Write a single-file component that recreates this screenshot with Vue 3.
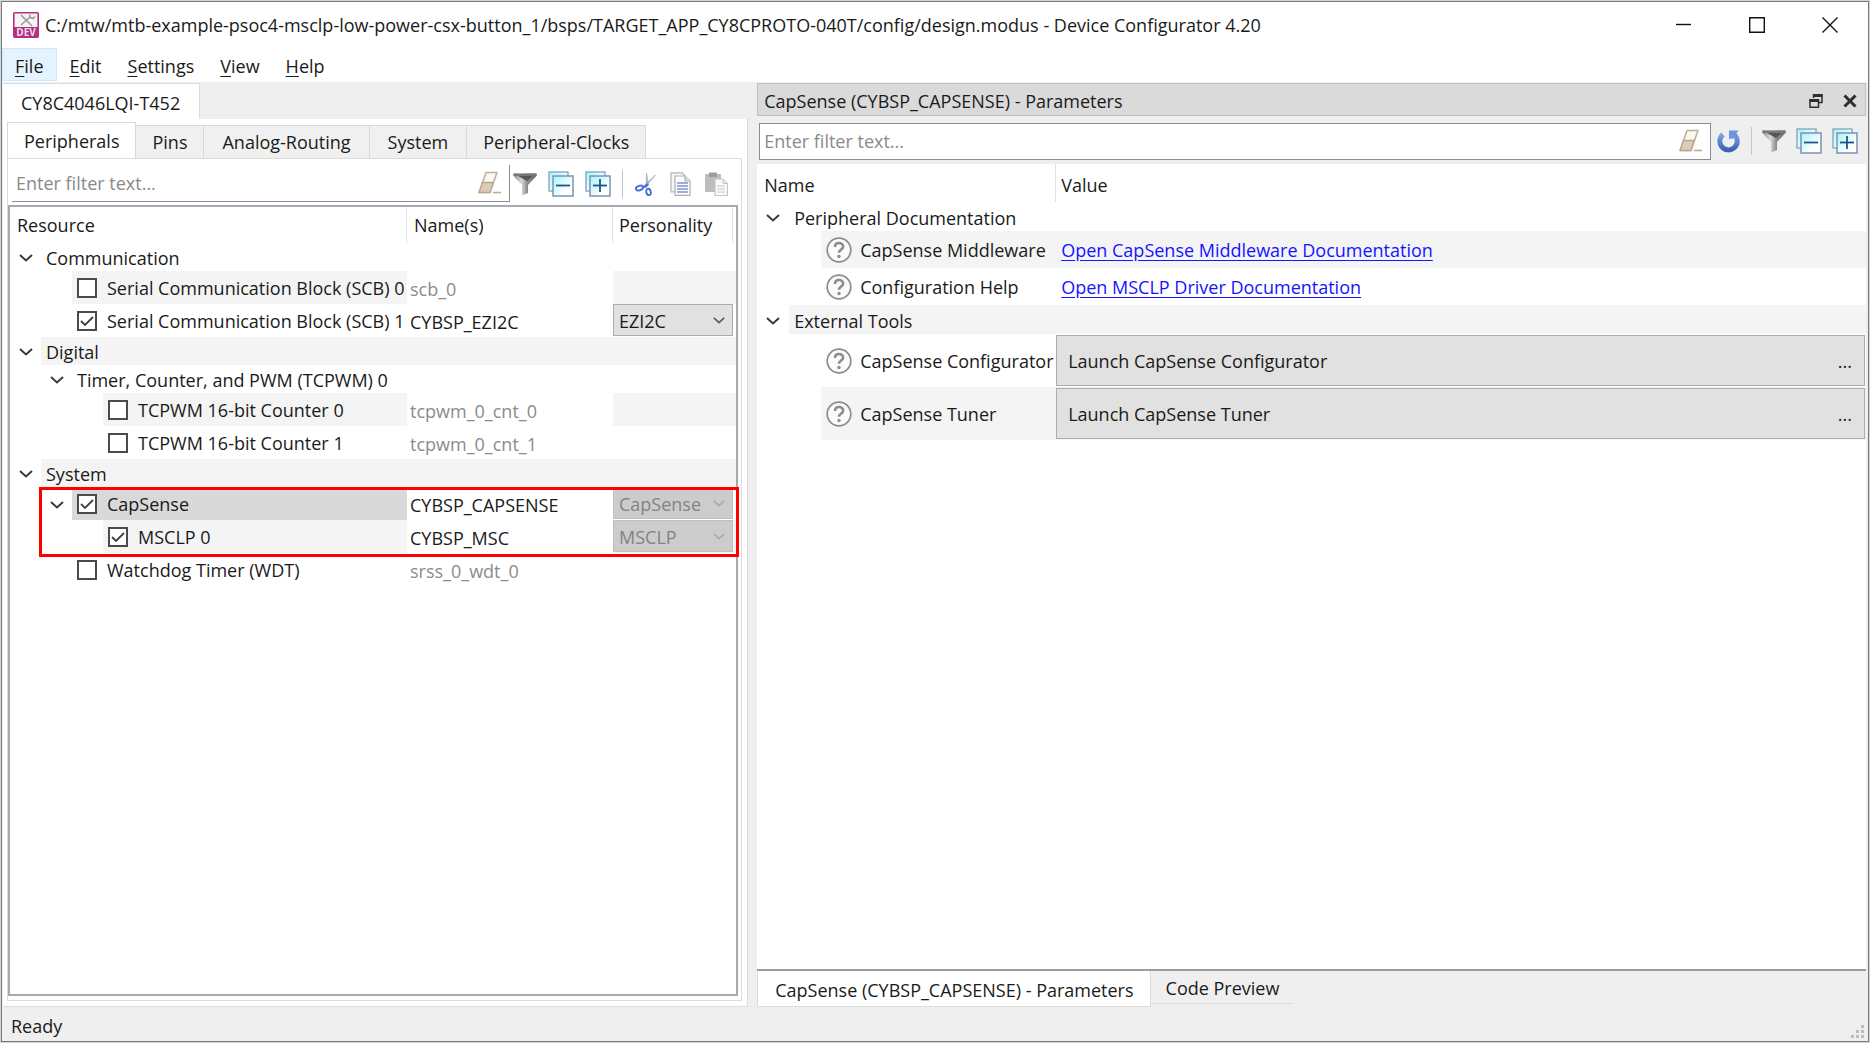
<script setup>
import { ref } from 'vue'

const menus = ['File', 'Edit', 'Settings', 'View', 'Help']
const tabs = ['Peripherals', 'Pins', 'Analog-Routing', 'System', 'Peripheral-Clocks']
const leftFilter = ref('')
const rightFilter = ref('')

const groups = ref([
  {
    id: 'communication',
    rows: [
      { depth: 0, label: 'Communication', branch: true },
      { depth: 1, label: 'Serial Communication Block (SCB) 0', name: 'scb_0', checked: false, shade: true },
      { depth: 1, label: 'Serial Communication Block (SCB) 1', name: 'CYBSP_EZI2C', checked: true, personality: 'EZI2C' }
    ]
  },
  {
    id: 'digital',
    rows: [
      { depth: 0, label: 'Digital', branch: true, shade: true },
      { depth: 1, label: 'Timer, Counter, and PWM (TCPWM) 0', branch: true },
      { depth: 2, label: 'TCPWM 16-bit Counter 0', name: 'tcpwm_0_cnt_0', checked: false, shade: true },
      { depth: 2, label: 'TCPWM 16-bit Counter 1', name: 'tcpwm_0_cnt_1', checked: false }
    ]
  },
  {
    id: 'system',
    rows: [{ depth: 0, label: 'System', branch: true, shade: true }]
  },
  {
    id: 'capsense',
    marked: true,
    rows: [
      { depth: 1, label: 'CapSense', branch: true, name: 'CYBSP_CAPSENSE', checked: true, personality: 'CapSense', locked: true, selected: true },
      { depth: 2, label: 'MSCLP 0', name: 'CYBSP_MSC', checked: true, personality: 'MSCLP', locked: true, shade: true }
    ]
  },
  {
    id: 'watchdog',
    rows: [{ depth: 1, label: 'Watchdog Timer (WDT)', name: 'srss_0_wdt_0', checked: false }]
  }
])

const parameters = [
  { label: 'Peripheral Documentation', group: true },
  { label: 'CapSense Middleware', link: 'Open CapSense Middleware Documentation', shade: true },
  { label: 'Configuration Help', link: 'Open MSCLP Driver Documentation' },
  { label: 'External Tools', group: true, shade: true },
  { label: 'CapSense Configurator', action: 'Launch CapSense Configurator' },
  { label: 'CapSense Tuner', action: 'Launch CapSense Tuner', shade: true }
]
</script>

<template>
  <svg class="defs" aria-hidden="true">
    <defs>
      <linearGradient id="g-cyan" x1="0" y1="0" x2="1" y2="1">
        <stop offset="0" stop-color="#a5f3f8" /><stop offset="0.7" stop-color="#ffffff" />
      </linearGradient>
      <linearGradient id="g-funnel" x1="0" y1="0" x2="1" y2="0">
        <stop offset="0" stop-color="#8a8a8a" /><stop offset="0.35" stop-color="#d8d8d8" /><stop offset="0.6" stop-color="#8c8c8c" /><stop offset="1" stop-color="#6e6e6e" />
      </linearGradient>
      <linearGradient id="g-blue" x1="0" y1="0" x2="0" y2="1">
        <stop offset="0" stop-color="#7da2e8" /><stop offset="1" stop-color="#3d62b4" />
      </linearGradient>
      <symbol id="i-eraser" viewBox="0 0 24 24">
        <path d="M9 1.500h11L13 21.500H2z" fill="#fbf8f3" stroke="#bcae97" stroke-width="1.500" stroke-linejoin="round" />
        <path d="M5.500 11.500h10.500L13 21.500H2z" fill="#dccdb9" stroke="#b9a88e" stroke-width="1.300" stroke-linejoin="round" />
        <path d="M16 21.500h8" stroke="#bba98c" stroke-width="1.500" />
      </symbol>
      <symbol id="i-funnel" viewBox="0 0 24 24">
        <path d="M.5 1.500h23v2.500L15 13v8l-6 2.500V13L.5 4z" fill="url(#g-funnel)" />
        <path d="M.5 1.500h23v2.500H.5z" fill="#777" />
        <path d="M5 4h15l-6 5z" fill="#555" />
      </symbol>
      <symbol id="i-collapse" viewBox="0 0 26 26">
        <rect x="1" y="1" width="19" height="19" fill="url(#g-cyan)" stroke="#7fa3bd" stroke-width="1.300" />
        <rect x="5" y="5" width="20" height="20" fill="url(#g-cyan)" stroke="#7c92b4" stroke-width="1.500" />
        <path d="M8 14.500h14" stroke="#1c5588" stroke-width="1.800" />
      </symbol>
      <symbol id="i-expand" viewBox="0 0 26 26">
        <use href="#i-collapse" />
        <path d="M15 8v13" stroke="#1c5588" stroke-width="1.800" />
      </symbol>
      <symbol id="i-chevron" viewBox="0 0 14 8">
        <path d="M1 1l6 5.500L13 1" fill="none" stroke="currentColor" stroke-width="2" />
      </symbol>
    </defs>
  </svg>

  <div class="window">
    <header class="titlebar">
      <svg class="app-icon" viewBox="0 0 26 26" aria-hidden="true">
        <rect x=".8" y=".8" width="24.400" height="24.400" rx="1" fill="#f6f2f5" stroke="#b2327f" stroke-width="1.600" />
        <path d="M8 3l6 6 5 5M8 13l9-8" stroke="#9a9a9a" stroke-width="1.600" fill="none" />
        <path d="M17 2.500v3l3 1 2-2" stroke="#9a9a9a" stroke-width="1.600" fill="none" />
        <rect x="1" y="15" width="24" height="10" fill="#b2327f" />
        <text x="13" y="24" text-anchor="middle" font-size="10" font-weight="700" fill="#f5dbea">DEV</text>
      </svg>
      <h1>C:/mtw/mtb-example-psoc4-msclp-low-power-csx-button_1/bsps/TARGET_APP_CY8CPROTO-040T/config/design.modus - Device Configurator 4.20</h1>
      <div class="window-buttons">
        <button type="button" aria-label="Minimize"><svg viewBox="0 0 16 16"><path d="M0 7.500h15" /></svg></button>
        <button type="button" aria-label="Maximize"><svg viewBox="0 0 16 16"><path d="M.7.700h14.600v14.600H.7z" /></svg></button>
        <button type="button" aria-label="Close"><svg viewBox="0 0 16 16"><path d="M.5.500l15 15M15.500.500l-15 15" /></svg></button>
      </div>
    </header>

    <nav class="menubar">
      <button v-for="(m, i) in menus" :key="m" type="button" :class="{ active: i === 0 }"><u>{{ m[0] }}</u>{{ m.slice(1) }}</button>
    </nav>

    <main class="body">
      <section class="left">
        <button type="button" class="device-tab">CY8C4046LQI-T452</button>
        <div class="device-pane">
          <div class="tabs" role="tablist">
            <button v-for="(t, i) in tabs" :key="t" type="button" role="tab" :aria-selected="i === 0">{{ t }}</button>
          </div>
          <div class="tab-pane">
            <div class="tools">
              <div class="filter open">
                <input v-model="leftFilter" type="text" placeholder="Enter filter text..." aria-label="Filter resources" />
                <button type="button" aria-label="Clear filter"><svg class="i24"><use href="#i-eraser" /></svg></button>
              </div>
              <button type="button" aria-label="Filter"><svg class="i24"><use href="#i-funnel" /></svg></button>
              <button type="button" aria-label="Collapse all"><svg class="i26"><use href="#i-collapse" /></svg></button>
              <button type="button" aria-label="Expand all"><svg class="i26"><use href="#i-expand" /></svg></button>
              <span class="sep"></span>
              <button type="button" aria-label="Cut">
                <svg class="i24" viewBox="0 0 24 24">
                  <path d="M12.500 1l2 12-2.500 3zM21.500 3l-10 12-2-1z" fill="#b3c0d0" stroke="#94a5bb" stroke-width=".6" />
                  <path d="M14 12l-4 3.500" stroke="#3f6fd0" stroke-width="2.200" />
                  <ellipse cx="5.500" cy="16" rx="3.700" ry="2.200" transform="rotate(-20 5.500 16)" fill="none" stroke="#3f6fd0" stroke-width="1.900" />
                  <ellipse cx="14.500" cy="20" rx="2.200" ry="3.200" transform="rotate(-15 14.500 20)" fill="none" stroke="#3f6fd0" stroke-width="1.900" />
                </svg>
              </button>
              <button type="button" aria-label="Copy">
                <svg class="i24" viewBox="0 0 24 24">
                  <path d="M2 .8h11l3 3v16H2z" fill="#f6f6f6" stroke="#b5b5b5" stroke-width="1.200" />
                  <path d="M6 4h10l5 5v14.300H6z" fill="#fdfdfd" stroke="#b0b0b0" stroke-width="1.200" />
                  <path d="M16 4v5h5" fill="#e4e4e4" stroke="#b0b0b0" stroke-width="1.200" />
                  <path d="M8 11h11M8 14h11M8 17h11M8 20h11" stroke="#7d94d3" stroke-width="1.500" />
                </svg>
              </button>
              <button type="button" aria-label="Paste">
                <svg class="i24" viewBox="0 0 24 24">
                  <path d="M1 2h16v18H1z" fill="#bdbdbd" />
                  <path d="M5 .5h8V5H5z" fill="#9c9c9c" />
                  <path d="M11 7h8l4.500 4.500v12H11z" fill="#fafafa" stroke="#c5c5c5" stroke-width="1.200" />
                  <path d="M19 7v4.500h4.500" fill="#e8e8e8" stroke="#c5c5c5" />
                  <path d="M13 14h8M13 17h8M13 20h8" stroke="#d6d6d6" stroke-width="1.500" />
                </svg>
              </button>
            </div>

            <div class="tree">
              <table>
                <colgroup><col class="c-resource" /><col class="c-name" /><col /></colgroup>
                <thead>
                  <tr><th scope="col">Resource</th><th scope="col">Name(s)</th><th scope="col"><span class="last-head">Personality</span></th></tr>
                </thead>
                <tbody v-for="g in groups" :key="g.id" :class="{ marked: g.marked }">
                  <tr v-for="r in g.rows" :key="r.label" :class="{ leaf: r.name, shade: r.shade, selected: r.selected }">
                    <td>
                      <div class="node" :class="'d' + r.depth">
                        <button v-if="r.branch" type="button" class="twist" :aria-label="'Toggle ' + r.label"><svg><use href="#i-chevron" /></svg></button>
                        <span v-else class="twist"></span>
                        <label v-if="r.name" class="fill"><input v-model="r.checked" type="checkbox" />{{ r.label }}</label>
                        <span v-else class="fill">{{ r.label }}</span>
                      </div>
                    </td>
                    <td class="name">
                      <input v-if="r.name" v-model="r.name" type="text" :disabled="!r.checked" :aria-label="r.label + ' name'" />
                    </td>
                    <td class="pers">
                      <div v-if="r.personality" class="combo">
                        <select :disabled="r.locked" :aria-label="r.label + ' personality'"><option>{{ r.personality }}</option></select>
                        <svg><use href="#i-chevron" /></svg>
                      </div>
                    </td>
                  </tr>
                </tbody>
              </table>
            </div>
          </div>
        </div>
      </section>

      <section class="right">
        <header class="dock-title">
          <h2>CapSense (CYBSP_CAPSENSE) - Parameters</h2>
          <button type="button" aria-label="Float">
            <svg viewBox="0 0 14 14"><path d="M4.500 4V1h8.500v7.500h-3" fill="none" stroke="#2e2e2e" stroke-width="1.500" /><path d="M4 1.500h9.500" stroke="#2e2e2e" stroke-width="3" /><path d="M1 6h8.500v7.300H1z" fill="#dadada" stroke="#2e2e2e" stroke-width="1.500" /><path d="M.5 6.500h9.500" stroke="#2e2e2e" stroke-width="3" /></svg>
          </button>
          <button type="button" aria-label="Close panel">
            <svg viewBox="0 0 14 14"><path d="M1.500 1.500l11 11M12.500 1.500l-11 11" stroke="#2e2e2e" stroke-width="3" /></svg>
          </button>
        </header>
        <div class="tools">
          <div class="filter">
            <input v-model="rightFilter" type="text" placeholder="Enter filter text..." aria-label="Filter parameters" />
            <button type="button" aria-label="Clear filter"><svg class="i24"><use href="#i-eraser" /></svg></button>
          </div>
          <button type="button" aria-label="Reset">
            <svg class="i24" viewBox="0 0 24 24">
              <path d="M6 5.500A8.700 8.700 0 1 0 18.500 7" fill="none" stroke="url(#g-blue)" stroke-width="5" />
              <path d="M12 1.500h9.500l-2 3 2 3-3.500 1.500-6 1z" fill="#6f95e0" />
            </svg>
          </button>
          <span class="sep"></span>
          <button type="button" aria-label="Filter"><svg class="i24"><use href="#i-funnel" /></svg></button>
          <button type="button" aria-label="Collapse all"><svg class="i26"><use href="#i-collapse" /></svg></button>
          <button type="button" aria-label="Expand all"><svg class="i26"><use href="#i-expand" /></svg></button>
        </div>
        <div class="params">
          <table>
            <colgroup><col class="c-param" /><col /></colgroup>
            <thead><tr><th scope="col">Name</th><th scope="col">Value</th></tr></thead>
            <tbody>
              <tr v-for="p in parameters" :key="p.label" :class="{ group: p.group, shade: p.shade, launch: p.action }">
                <td>
                  <div class="node d0">
                    <button v-if="p.group" type="button" class="twist" :aria-label="'Toggle ' + p.label"><svg><use href="#i-chevron" /></svg></button>
                    <span v-else class="twist"></span>
                    <span class="fill">
                      <svg v-if="!p.group" class="help" viewBox="0 0 26 26" aria-hidden="true">
                        <circle cx="13" cy="13" r="11.800" fill="#fbfbfb" stroke="#8c8c8c" stroke-width="1.700" />
                        <path d="M9 10c0-5.200 8.200-5 8.200-.6 0 3.200-4.200 3.200-4.200 6.400" fill="none" stroke="#8c8c8c" stroke-width="2.500" />
                        <circle cx="13" cy="19.500" r="1.700" fill="#8c8c8c" />
                      </svg>{{ p.label }}
                    </span>
                  </div>
                </td>
                <td class="value">
                  <a v-if="p.link" href="#">{{ p.link }}</a>
                  <button v-if="p.action" type="button" class="launch-button"><span>{{ p.action }}</span><span>...</span></button>
                </td>
              </tr>
            </tbody>
          </table>
        </div>
        <div class="bottom-tabs" role="tablist">
          <button type="button" role="tab" aria-selected="true">CapSense (CYBSP_CAPSENSE) - Parameters</button>
          <button type="button" role="tab" aria-selected="false">Code Preview</button>
        </div>
      </section>
    </main>

    <footer class="status">
      <span>Ready</span>
      <svg viewBox="0 0 14 14" aria-hidden="true"><path d="M10 0h3v3h-3zM5 5h3v3H5zM10 5h3v3h-3zM0 10h3v3H0zM5 10h3v3H5zM10 10h3v3h-3z" fill="#bdbdbd" /></svg>
    </footer>
  </div>
</template>

<style>
html, body { margin: 0; background: #d4d4d4; }
</style>

<style scoped>
* { box-sizing: border-box; }
.defs { position: absolute; width: 0; height: 0; }
.window {
  display: flex;
  flex-direction: column;
  min-height: calc(100vh - 2px);
  margin: 1px;
  border: 1px solid #777a7c;
  background: #efefef;
  color: #1a1a1a;
  font-family: "Open Sans", "Noto Sans", sans-serif;
  font-size: 18px;
  line-height: 24px;
}
button, input, select { font: inherit; color: inherit; }
button { padding: 0; border: 0; background: none; white-space: nowrap; }
h1, h2 { margin: 0; font-size: 18px; font-weight: 400; white-space: nowrap; }
svg { display: block; flex: none; }
.i24 { width: 24px; height: 24px; }
.i26 { width: 26px; height: 26px; }

.titlebar { display: flex; align-items: center; height: 46px; padding-left: 11px; background: #fff; }
.app-icon { width: 26px; height: 26px; margin-right: 6px; }
.titlebar h1 { flex: 1; min-width: 0; overflow: hidden; }
.window-buttons { display: flex; padding-right: 2px; }
.window-buttons button { display: grid; place-items: center; width: 73px; height: 46px; }
.window-buttons svg { width: 16px; height: 16px; fill: none; stroke: #111; stroke-width: 1.400; }

.menubar { display: flex; height: 34px; padding-bottom: 1px; background: #fff; }
.menubar button { padding: 2px 12px 0; border: 1px solid transparent; }
.menubar button.active { background: #e5f3ff; border-color: #cce8ff; }
.menubar u { text-underline-offset: 3px; }

.body { flex: 1; display: grid; grid-template-columns: 40% minmax(0, 1fr); column-gap: 9px; padding: 1px 2px 0 1px; }
.left { display: flex; flex-direction: column; min-width: 0; }
.device-tab { align-self: flex-start; height: 36px; padding: 2px 19px 0 18px; background: #fff; border: 1px solid #dcdcdc; border-width: 1px 1px 0 0; }
.device-pane { flex: 1; display: flex; flex-direction: column; padding: 3px 5px 5px 4px; background: #fff; border: 1px solid #dcdcdc; border-width: 0 1px 1px 0; }
.tabs { display: flex; align-items: flex-end; }
.tabs button { height: 33px; padding: 0 18px; background: #f0f0f0; border: 1px solid #d9d9d9; border-left-width: 0; border-bottom: 0; }
.tabs button:nth-child(2), .tabs button:last-child { padding: 0 16px; }
.tabs button[aria-selected="true"] { height: 36px; padding: 0 16px; background: #fff; border-left-width: 1px; }
.tab-pane { flex: 1; display: flex; flex-direction: column; padding: 5px 3px 4px 0; border: 1px solid #dcdcdc; }
.tools { display: flex; align-items: center; }
.tab-pane .tools { gap: 11px; height: 41px; padding: 0 10px 2px 4px; }
.filter { flex: 1; display: flex; align-items: center; min-width: 0; height: 37px; padding: 0 8px 0 4px; background: #fff; border: 1px solid #888e98; }
.filter.open { border-width: 0 1px 1px 0; margin-right: -8px; }
.filter input { flex: 1; min-width: 0; padding: 0; border: 0; outline: 0; background: none; }
.filter input::placeholder { color: #8a8a8a; opacity: 1; }
.sep { width: 1px; height: 28px; background: #c6c6c6; }

table { width: 100%; table-layout: fixed; border-collapse: separate; border-spacing: 0; }
th, td { padding: 0; text-align: left; font-weight: 400; white-space: nowrap; }
.tree { flex: 1; border: 2px solid #a5a9b1; background: #fff; }
.c-resource { width: 397px; }
.c-name { width: 206px; }
.tree thead th { height: 36px; padding-left: 7px; border-right: 1px solid #e2e2e2; }
.tree thead th:last-child { padding-left: 6px; border-right: 0; }
.last-head { display: flex; align-items: center; width: 114px; height: 36px; border-right: 1px solid #e2e2e2; }
.tree tr { height: 28px; }
.tree tr.leaf { height: 33px; }
.node { display: flex; height: 28px; padding-top: 0; }
.leaf .node { height: 33px; }
.node.d1 { padding-left: 31px; }
.node.d2 { padding-left: 62px; }
.twist { flex: none; display: grid; place-items: center; width: 31px; padding-right: 6px; color: #3a3a3a; }
.twist svg { width: 14px; height: 8px; margin-left: 6px; }
.fill { flex: 1; display: flex; align-items: center; min-width: 0; padding-left: 5px; }
span.fill, button.twist { padding-top: 2px; }
.shade .fill, .shade td + td { background: #f4f4f4; }
.shade.leaf td.name { background: #fff; }
.selected .fill { background: #d9d9d9; }
input[type="checkbox"] {
  appearance: none;
  flex: none;
  width: 20px;
  height: 20px;
  margin: 0 10px 0 0;
  border: 2px solid #4a4a4a;
  background: #fff;
}
input[type="checkbox"]:checked {
  background: #fff url("data:image/svg+xml,%3Csvg xmlns='http://www.w3.org/2000/svg' viewBox='0 0 16 16'%3E%3Cpath d='M2 8l4 4 8-8' fill='none' stroke='%23404040' stroke-width='1.8'/%3E%3C/svg%3E") center / 16px 16px no-repeat;
}
.name input { display: block; width: 100%; height: 33px; padding: 3px 3px 0; border: 0; background: none; outline: 0; }
.name input:disabled { color: #8c8c8c; }
.combo { position: relative; width: 120px; height: 33px; }
.combo select { appearance: none; display: block; width: 100%; height: 32px; padding: 2px 5px 0; border: 1px solid #adadad; border-radius: 0; background: #e1e1e1; }
.combo select:disabled { background: #ccc; border-color: #bfbfbf; color: #838383; opacity: 1; }
.combo svg { position: absolute; right: 8px; top: 13px; width: 12px; height: 7px; color: #5a5a5a; pointer-events: none; }
.combo select:disabled + svg { color: #aaa; }
.marked { position: relative; }
.marked::after { content: ""; position: absolute; inset: 0 -3px -4px 29px; border: 3px solid #f00; pointer-events: none; }

.right { display: flex; flex-direction: column; min-width: 0; }
.dock-title { display: flex; align-items: center; gap: 20px; height: 33px; padding: 3px 8px 0 6px; background: #dadada; border: 1px solid #bfbfbf; }
.dock-title h2 { flex: 1; }
.dock-title svg { width: 14px; height: 14px; }
.right .tools { gap: 10px; height: 48px; padding: 2px 8px 0 2px; }
.right .filter { margin-right: -4px; }
.params { flex: 1; background: #fff; border-bottom: 2px solid #989da6; }
.c-param { width: 299px; }
.params thead th { height: 38px; padding: 3px 0 0 7px; }
.params thead th:first-child { border-right: 1px solid #e2e2e2; }
.params th + th { padding-left: 5px; }
.params tr { height: 37px; }
.params .node { height: 37px; padding-left: 32px; }
.params .group, .params .group .node { height: 29px; }
.params .group .node { padding-left: 0; }
.params .launch, .params .launch .node { height: 53px; }
.params .twist { width: 32px; }
.params .fill { padding-top: 0; }
.params .group .fill { padding-top: 2px; }
.help { width: 26px; height: 26px; margin-right: 8px; }
.value a { padding-left: 5px; color: #1414ff; text-underline-offset: 3px; }
.launch-button { display: flex; justify-content: space-between; align-items: center; width: calc(100% - 1px); height: 51px; padding: 0 12px 0 11px; background: #e1e1e1; border: 1px solid #adadad; }
.bottom-tabs { display: flex; align-items: flex-start; height: 36px; }
.bottom-tabs button { height: 33px; padding: 2px 15px 0; border-bottom: 1px solid #dcdcdc; }
.bottom-tabs button[aria-selected="true"] { height: 36px; padding: 2px 16px 0 17px; background: #fff; border: 1px solid #dcdcdc; border-top: 0; }

.status { display: flex; justify-content: space-between; align-items: center; height: 34px; padding: 3px 3px 0 9px; }
.status svg { width: 14px; height: 14px; align-self: flex-end; margin-bottom: 2px; }
</style>
